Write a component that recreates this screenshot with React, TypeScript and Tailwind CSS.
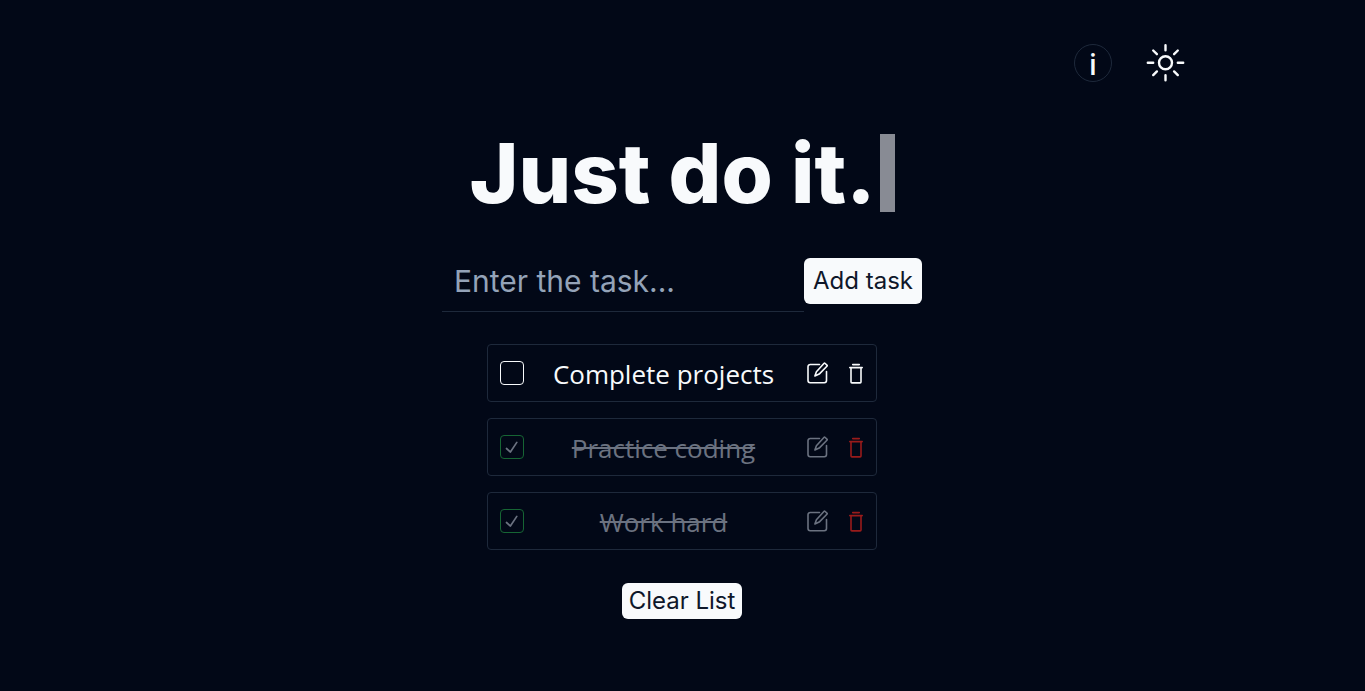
import { useState } from 'react';

type Task = { id: number; text: string; done: boolean };

const initialTasks: Task[] = [
  { id: 1, text: 'Complete projects', done: false },
  { id: 2, text: 'Practice coding', done: true },
  { id: 3, text: 'Work hard', done: true },
];

function SunIcon() {
  return (
    <svg viewBox="0 0 42 42" className="size-[42px]" fill="none" stroke="currentColor" strokeWidth="2.4" strokeLinecap="round" aria-hidden="true">
      <circle cx="21.500" cy="20.800" r="6.5" />
      <path d="M21.500 3.300V8.300M21.500 33.300V38.300M3.800 20.800H9.200M33.800 20.800H39.200M9.200 8.500L12.900 12.200M30.100 29.400L33.800 33.100M9.200 33.100L12.900 29.400M30.100 12.200L33.800 8.500" />
    </svg>
  );
}

function EditIcon() {
  return (
    <svg viewBox="0 0 22 22" className="size-[22px]" fill="none" stroke="currentColor" strokeWidth="1.6" strokeLinecap="round" strokeLinejoin="round" aria-hidden="true">
      <path d="M12.5 2.500H3.2A2.2 2.2 0 0 0 1 4.700V18.500A2.200 2.200 0 0 0 3.200 20.700H17.300A2.200 2.200 0 0 0 19.500 18.500V9.500" />
      <path d="M7.900 14L9.400 9.700L16.900 1.500Q17.500 .9 18.200 1.500L19.900 3.100Q20.500 3.700 19.900 4.300L12.200 12.100Z" />
    </svg>
  );
}

function TrashIcon() {
  return (
    <svg viewBox="0 0 14 22" className="h-[22px] w-[14px]" fill="none" stroke="currentColor" strokeWidth="1.600" strokeLinecap="round" strokeLinejoin="round" aria-hidden="true">
      <path d="M3.700 2.600H10.300M.8 5.600H13.200M2 5.600V20Q2 20.900 2.900 20.900H11.100Q12 20.900 12 20V5.600" />
    </svg>
  );
}

function TaskRow({ task, onToggle, onDelete }: { task: Task; onToggle: () => void; onDelete: () => void }) {
  return (
    <li className="flex h-[58px] items-center rounded border border-[#1e293b] px-3">
      <span className="grid size-6 shrink-0 place-items-center">
        <input
          type="checkbox"
          id={'task-' + task.id}
          checked={task.done}
          onChange={onToggle}
          className="peer col-start-1 row-start-1 size-6 appearance-none rounded border border-slate-50 checked:border-[#166534]"
        />
        <svg viewBox="0 0 14 14" className="pointer-events-none invisible col-start-1 row-start-1 size-3.5 text-[#6b7280] peer-checked:visible" fill="none" stroke="currentColor" strokeWidth="1.700" strokeLinecap="round" strokeLinejoin="round" aria-hidden="true">
          <path d="M1.500 8.500L5.400 12L11.800 2.400" />
        </svg>
      </span>
      <label
        htmlFor={'task-' + task.id}
        className={
          "flex-1 pt-0.5 pr-1 text-center font-['Open_Sans',sans-serif] text-[26px] leading-9 " +
          (task.done ? 'text-[#6b7280] line-through' : 'text-slate-50')
        }
      >
        {task.text}
      </label>
      <div className="flex shrink-0 items-center gap-5 pr-px">
        <button type="button" aria-label={'Edit ' + task.text} className={task.done ? 'text-[#6b7280]' : 'text-slate-50'}>
          <EditIcon />
        </button>
        <button type="button" onClick={onDelete} aria-label={'Delete ' + task.text} className={task.done ? 'text-[#991b1b]' : 'text-slate-50'}>
          <TrashIcon />
        </button>
      </div>
    </li>
  );
}

export default function App() {
  const [tasks, setTasks] = useState(initialTasks);
  const [draft, setDraft] = useState('');

  const addTask = (e: React.FormEvent) => {
    e.preventDefault();
    if (!draft.trim()) return;
    setTasks([...tasks, { id: Date.now(), text: draft.trim(), done: false }]);
    setDraft('');
  };

  return (
    <div className="min-h-screen bg-[#020817] px-4 font-['Inter',sans-serif] text-slate-50">
      <header className="mx-auto flex max-w-[1007px] items-center justify-end gap-8 pt-[42px]">
        <button type="button" aria-label="About" className="grid size-[38px] place-items-center rounded-full border border-[#1e293b] pt-0.5 font-['Open_Sans',sans-serif] text-[28px] leading-none font-semibold">
          i
        </button>
        <button type="button" aria-label="Toggle theme">
          <SunIcon />
        </button>
      </header>
      <main className="flex flex-col items-center pr-px">
        <h1 className="mt-[49px] flex items-center gap-1 text-[83px] leading-[80px] font-extrabold">
          Just do it.
          <span className="h-[78px] w-[15px] bg-[#888b94]" aria-hidden="true" />
        </h1>
        <form onSubmit={addTask} className="mt-[37px] flex w-full max-w-[480px] items-start">
          <input
            type="text"
            aria-label="Task"
            placeholder="Enter the task..."
            value={draft}
            onChange={(e) => setDraft(e.target.value)}
            className="h-[62px] min-w-0 flex-1 border-b border-[#1e293b] bg-transparent px-3 text-[30px] outline-none placeholder:text-[#94a3b8]"
          />
          <button type="submit" className="mt-2 h-[46px] w-[118px] rounded-md bg-slate-50 text-[24px] text-[#0f172a]">
            Add task
          </button>
        </form>
        <ul className="mt-8 flex w-full max-w-[390px] flex-col gap-4">
          {tasks.map((task) => (
            <TaskRow
              key={task.id}
              task={task}
              onToggle={() => setTasks(tasks.map((t) => (t.id === task.id ? { ...t, done: !t.done } : t)))}
              onDelete={() => setTasks(tasks.filter((t) => t.id !== task.id))}
            />
          ))}
        </ul>
        <button type="button" onClick={() => setTasks([])} className="mt-[33px] h-9 w-[120px] rounded-md bg-slate-50 text-[24px] leading-9 text-[#0f172a]">
          Clear List
        </button>
      </main>
    </div>
  );
}
